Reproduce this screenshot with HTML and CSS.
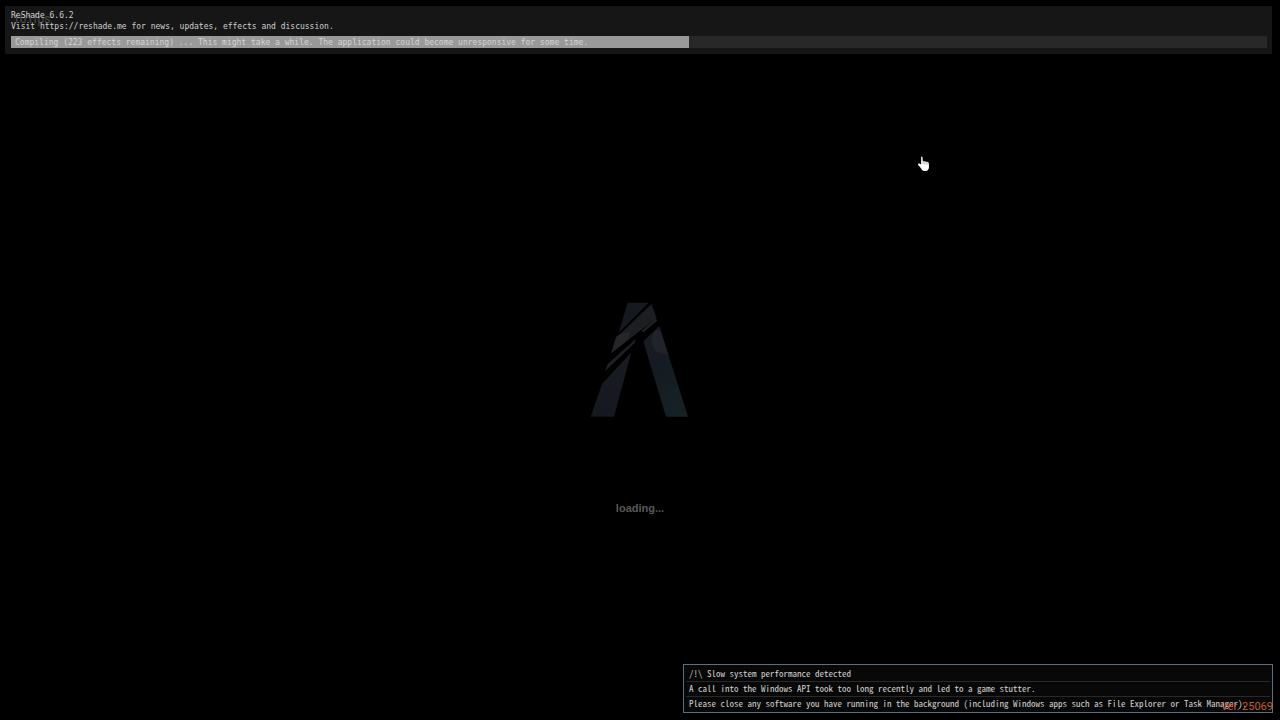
FILE: index.html
```html
<!DOCTYPE html>
<html lang="en">
<head>
<meta charset="utf-8">
<title>Loading</title>
<link rel="stylesheet" href="styles.css">
</head>
<body>
<div class="fps">101fps</div>
<header class="overlay">
  <p class="line">ReShade 6.6.2</p>
  <p class="line">Visit https://reshade.me for news, updates, effects and discussion.</p>
  <div class="compile">
    <progress class="bar" id="compile" value="54" max="100"></progress>
    <label class="bar-label" for="compile">Compiling (223 effects remaining) ... This might take a while. The application could become unresponsive for some time.</label>
  </div>
</header>
<main class="splash">
  <svg class="logo" viewBox="0 0 360 420" aria-hidden="true">
    <defs>
      <linearGradient id="left" x1="0" y1="0" x2="0" y2="1"><stop offset="0" stop-color="#191b21"/><stop offset="1" stop-color="#161820"/></linearGradient>
      <linearGradient id="right" x1="0" y1="0" x2="0.6" y2="1"><stop offset="0" stop-color="#191c22"/><stop offset="0.5" stop-color="#151b22"/><stop offset="1" stop-color="#162125"/></linearGradient>
    </defs>
    <path fill="#161920" d="M143 38H206L116 128Z"/>
    <path fill="#1d1e22" d="M214 42L230 84L94 189L107 145Z"/>
    <path fill="#26262a" d="M110 139Q130 123 149 129L144 149L94 189Z"/>
    <path fill="#202126" d="M228 85L231 93L190 127L184 123ZM168 146L164 158L75 244L83 223Z"/>
    <path fill="url(#left)" d="M154 187L102 380H32L66 282Z"/>
    <path fill="url(#right)" d="M238 108L324 380H258L190 154Z"/>
    <path fill="#202329" d="M229 119L243 124L264 193Q230 195 218 168Q211 148 220 128Z"/>
  </svg>
  <p class="loading">loading...</p>
</main>
<svg class="cursor" viewBox="0 0 12 17" aria-hidden="true">
  <path fill="#d9d9d9" d="M3 1Q3.500 0 4.500 1L5 5L10 6Q11 6.500 11 8V12Q10 15 7 15Q4 15 3 12L0 8.500Q0 7 1.500 7.500L3 8.500Z"/>
  <path fill="#fff" d="M3 8L10.500 9V12Q10 15 7 15Q4 15 3 12L0 8.500Q1 7 3 9Z"/>
</svg>
<aside class="warning">
  <p class="row">/!\ Slow system performance detected</p>
  <p class="row">A call into the Windows API took too long recently and led to a game stutter.</p>
  <p class="row">Please close any software you have running in the background (including Windows apps such as File Explorer or Task Manager).</p>
</aside>
<div class="version">Ver. 25069</div>
</body>
</html>
```
FILE: styles.css
```css
* { box-sizing: border-box; }
body {
  margin: 0;
  min-height: 100vh;
  display: flex;
  flex-direction: column;
  background: #000;
  color: #d0d0d0;
  font: 8px/11px "DejaVu Sans Mono", monospace;
  overflow: hidden;
}
p { margin: 0; }
.overlay { margin: 6px 8px 0 5px; padding: 4px 5px 5px 6px; background: #161616; }
.compile { display: grid; margin-top: 4px; }
.bar, .bar-label { grid-area: 1 / 1; }
.bar {
  appearance: none;
  width: 100%;
  height: 12px;
  border: 0;
  background: #282828;
}
.bar::-webkit-progress-bar { background: #282828; }
.bar::-webkit-progress-value { background: #999; }
.bar-label { z-index: 1; padding-left: 4px; line-height: 13px; color: #d4d4d4; }
.fps {
  position: absolute;
  z-index: 1;
  left: 13px;
  top: 13px;
  font: 12px/12px Roboto, sans-serif;
  color: #4c4c4c;
}
.overlay .line { position: relative; z-index: 2; }
.splash {
  flex: 1;
  display: flex;
  flex-direction: column;
  align-items: center;
  justify-content: center;
  padding-top: 32px;
}
.logo { width: 120px; height: 140px; }
.loading {
  margin-top: 70px;
  font: bold 11px/16px "Liberation Sans", sans-serif;
  color: #585858;
}
.cursor { position: absolute; left: 918px; top: 156px; width: 12px; height: 17px; }
.warning {
  position: absolute;
  right: 7px;
  bottom: 7px;
  min-width: 590px;
  padding: 2px 2px 1px;
  border: 1px solid #587082;
  background: #080808;
  font-family: "Noto Sans Mono CJK SC", "Liberation Mono", monospace;
  font-size: 9px;
}
.row { padding: 0 3px; line-height: 14px; white-space: nowrap; }
.row + .row { border-top: 1px solid #292929; }
.version {
  position: absolute;
  right: 7px;
  bottom: 6px;
  font: 11px/14px Roboto, sans-serif;
  color: #c35b32;
}
```
